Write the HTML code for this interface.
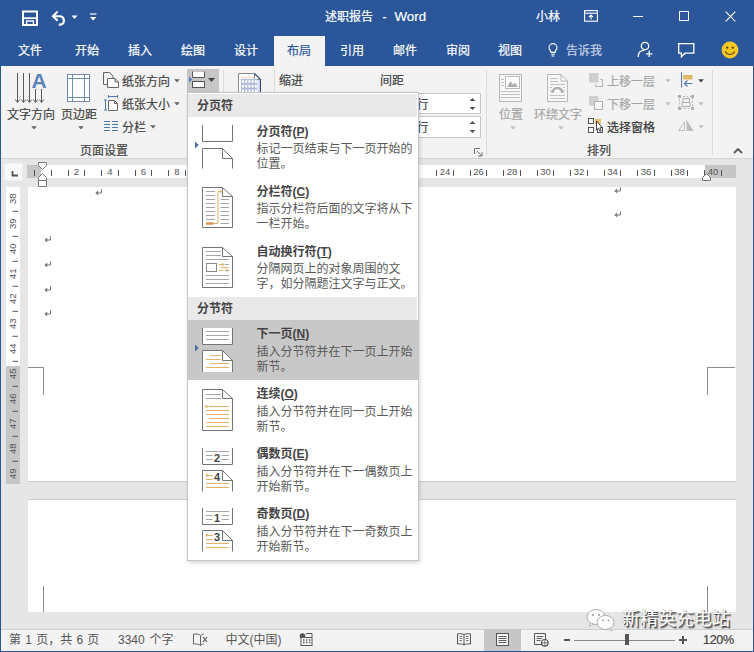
<!DOCTYPE html>
<html lang="zh-CN">
<head>
<meta charset="utf-8">
<title>述职报告 - Word</title>
<style>
html,body{margin:0;padding:0}
body{width:754px;height:652px;position:relative;overflow:hidden;background:#e6e6e6;
 font-family:"Liberation Sans","Noto Sans CJK SC",sans-serif;font-size:12px;color:#444;}
div,span,svg{position:absolute;box-sizing:border-box}
.t{white-space:nowrap;line-height:14px;height:14px;font-size:12px;-webkit-text-stroke:0.200px currentColor}
.n{-webkit-text-stroke:0;color:#595959}
.w{color:#fff}
.dis{color:#a6a6a6}
.b{font-weight:bold}
u{text-decoration:underline}
</style>
</head>
<body>
<!-- ===== title bar / tabs ===== -->
<div id="top" style="left:0;top:0;width:754px;height:66px;background:#2b579a"></div>

<!-- quick access toolbar -->
<svg style="left:22px;top:10px" width="17" height="17" viewBox="0 0 17 17">
 <path d="M1 1.500H15V15H1Z" fill="none" stroke="#fff" stroke-width="2"/>
 <path d="M1.500 8.200H15" stroke="#fff" stroke-width="1.800"/>
 <rect x="4.6" y="11" width="6.8" height="4" fill="none" stroke="#fff" stroke-width="1.4"/>
</svg>
<svg style="left:50px;top:9px" width="20" height="18" viewBox="0 0 20 18">
 <path d="M3 7.2H10.5A4.3 4.3 0 0 1 10.5 15.6H8.8" fill="none" stroke="#fff" stroke-width="2.100"/>
 <path d="M7.600 2.600L3 7.200L7.600 11.800" fill="none" stroke="#fff" stroke-width="2.100"/>
</svg>
<svg style="left:71px;top:15px" width="8" height="5" viewBox="0 0 8 5"><path d="M0.5 0.5H6.5L3.5 4Z" fill="#fff"/></svg>
<svg style="left:89px;top:13px" width="9" height="9" viewBox="0 0 9 9"><path d="M1 1H7.4" stroke="#fff" stroke-width="1.2"/><path d="M1 4H7.4L4.2 7.6Z" fill="#fff"/></svg>
<!-- title -->
<span class="t w" style="left:325px;top:10px">述职报告</span><span class="t w" style="left:382.500px;top:10px">-</span><span class="t w" style="left:394.500px;top:9.500px;font-size:13.300px">Word</span>
<span class="t w" style="left:536px;top:10px">小林</span>
<!-- ribbon display options -->
<svg style="left:584px;top:10px" width="14" height="12" viewBox="0 0 14 12">
 <rect x="0.6" y="0.6" width="12.8" height="10.6" fill="none" stroke="#fff" stroke-width="1.1"/>
 <path d="M0.6 3.2H13.4" stroke="#fff" stroke-width="1.1"/>
 <path d="M7 9.6V5.2M4.8 7.2L7 5L9.2 7.2" fill="none" stroke="#fff" stroke-width="1.1"/>
</svg>
<div style="left:633px;top:16px;width:10px;height:1px;background:#fff"></div>
<div style="left:679px;top:11px;width:10px;height:10px;border:1px solid #fff"></div>
<svg style="left:725px;top:11px" width="11" height="11" viewBox="0 0 11 11"><path d="M0.7 0.7L10.3 10.3M10.3 0.7L0.7 10.3" stroke="#fff" stroke-width="1.1"/></svg>
<!-- tabs -->
<div style="left:274px;top:36px;width:51px;height:30px;background:#f3f3f3"></div>
<span class="t w" style="left:18px;top:44px">文件</span>
<span class="t w" style="left:75px;top:44px">开始</span>
<span class="t w" style="left:128px;top:44px">插入</span>
<span class="t w" style="left:181px;top:44px">绘图</span>
<span class="t w" style="left:234px;top:44px">设计</span>
<span class="t" style="left:287px;top:44px;color:#2b579a">布局</span>
<span class="t w" style="left:340px;top:44px">引用</span>
<span class="t w" style="left:393px;top:44px">邮件</span>
<span class="t w" style="left:446px;top:44px">审阅</span>
<span class="t w" style="left:498px;top:44px">视图</span>
<svg style="left:548px;top:43px" width="10" height="14" viewBox="0 0 10 14">
 <path d="M3 9.4C3 7.6 1 6.9 1 4.6A4 4 0 0 1 9 4.6C9 6.9 7 7.6 7 9.4Z" fill="none" stroke="#fff" stroke-width="1.1"/>
 <path d="M3.2 11.2H6.8M3.6 13H6.4" stroke="#fff" stroke-width="1.1"/>
</svg>
<span class="t" style="left:566px;top:44px;color:#c5d1e6">告诉我</span>
<!-- share -->
<svg style="left:637px;top:41px" width="17" height="17" viewBox="0 0 17 17">
 <circle cx="8" cy="5" r="3.7" fill="none" stroke="#fff" stroke-width="1.3"/>
 <path d="M1.2 16C1.2 11.6 4 9.4 7.4 9.4" fill="none" stroke="#fff" stroke-width="1.3"/>
 <path d="M12.2 9.6V16M9 12.8H15.4" stroke="#fff" stroke-width="1.3"/>
</svg>
<!-- comments -->
<svg style="left:678px;top:43px" width="17" height="15" viewBox="0 0 17 15">
 <path d="M0.7 0.7H15.8V10.2H7L3.4 13.8V10.2H0.7Z" fill="none" stroke="#fff" stroke-width="1.3" stroke-linejoin="miter"/>
</svg>
<!-- smiley -->
<svg style="left:721px;top:41px" width="18" height="18" viewBox="0 0 18 18">
 <circle cx="9" cy="9" r="8.4" fill="#f6c822"/>
 <circle cx="6.2" cy="6.6" r="1.2" fill="#5a4a10"/><circle cx="11.8" cy="6.6" r="1.2" fill="#5a4a10"/>
 <path d="M4.4 10.4C5.6 14.4 12.4 14.4 13.6 10.4" fill="none" stroke="#5a4a10" stroke-width="1.2"/>
</svg>
<!-- ===== ribbon ===== -->
<div id="ribbon" style="left:1px;top:66px;width:752px;height:93px;background:#f3f3f3;border-bottom:1px solid #d4d4d4"></div>

<!-- text direction -->
<svg style="left:14px;top:72px" width="36" height="33" viewBox="0 0 36 33">
 <g stroke="#5a5a5a" stroke-width="1" fill="none">
  <path d="M3.5 1V30M9.5 1V30M15.5 1V30M21.5 17V30M27.5 17V30"/>
  <path d="M1.300 27.500L3.500 30.500L5.700 27.500M7.300 27.500L9.500 30.500L11.700 27.500M13.300 27.500L15.500 30.500L17.700 27.500M19.300 27.500L21.500 30.500L23.700 27.500M25.300 27.500L27.500 30.500L29.700 27.500"/>
 </g>
 <text x="17.5" y="15.6" font-family="Liberation Sans, sans-serif" font-weight="bold" font-size="21" fill="#5b83b8">A</text>
</svg>
<span class="t" style="left:7px;top:108px">文字方向</span>
<svg style="left:30.5px;top:126.3px" width="6" height="4" viewBox="0 0 6 4"><path d="M0.200 0.300H5.800L3 3.400Z" fill="#666"/></svg>
<!-- margins -->
<svg style="left:67px;top:74px" width="23" height="28" viewBox="0 0 23 28">
 <rect x="0.5" y="0.5" width="22" height="27" fill="#fff" stroke="#6d8fb3"/>
 <path d="M5.500 0.500V27.500M17.500 0.500V27.500M0.500 4.500H22.500M0.500 23.500H22.500" stroke="#6d8fb3" fill="none"/>
</svg>
<span class="t" style="left:61px;top:108px">页边距</span>
<svg style="left:77.5px;top:126.3px" width="6" height="4" viewBox="0 0 6 4"><path d="M0.200 0.300H5.800L3 3.400Z" fill="#666"/></svg>
<!-- orientation -->
<svg style="left:103px;top:72px" width="16" height="16" viewBox="0 0 16 16">
 <path d="M4 12.5H0.5V0.5H6.5L10 4V6" fill="none" stroke="#666"/>
 <path d="M4.5 6.5H12L15.5 10V15.5H4.5Z" fill="#fff" stroke="#666"/>
 <path d="M12 6.5V10H15.5" fill="none" stroke="#666"/>
</svg>
<span class="t" style="left:122px;top:75px">纸张方向</span>
<svg style="left:173.5px;top:79.3px" width="6" height="4" viewBox="0 0 6 4"><path d="M0.200 0.300H5.800L3 3.400Z" fill="#666"/></svg>
<!-- size -->
<svg style="left:104px;top:95px" width="15" height="16" viewBox="0 0 15 16">
 <path d="M4.5 1.5H13.5M4.5 0V3M13.5 0V3M1.5 5V15M0 5H3M0 15H3" stroke="#4f7cb3" fill="none"/>
 <path d="M4.5 5.5H10.5L13.5 8.5V15.500H4.5Z" fill="#fff" stroke="#666"/>
 <path d="M10.5 5.5V8.5H13.5" fill="none" stroke="#666"/>
</svg>
<span class="t" style="left:122px;top:98px">纸张大小</span>
<svg style="left:173.5px;top:102.3px" width="6" height="4" viewBox="0 0 6 4"><path d="M0.200 0.300H5.800L3 3.400Z" fill="#666"/></svg>
<!-- columns -->
<svg style="left:104px;top:121px" width="14" height="10" viewBox="0 0 14 10">
 <path d="M0 0.500H6M0 3.500H6M0 6.500H6M0 9.500H6M8 0.500H14M8 3.500H14M8 6.500H14M8 9.500H14" stroke="#4f7cb3"/>
</svg>
<span class="t" style="left:122px;top:121px">分栏</span>
<svg style="left:149.5px;top:125.3px" width="6" height="4" viewBox="0 0 6 4"><path d="M0.200 0.300H5.800L3 3.400Z" fill="#666"/></svg>
<span class="t" style="left:80px;top:144px">页面设置</span>
<!-- breaks button -->
<div style="left:187px;top:69px;width:32px;height:24px;background:#c6c6c6"></div>
<svg style="left:188px;top:71px" width="28" height="18" viewBox="0 0 28 18">
 <path d="M1 5.500L4 8.500L1 11.500Z" fill="#4f7cb3"/>
 <path d="M4.500 1V7H17V1Z" fill="#fff" stroke="none"/>
 <path d="M4.500 0.500V6.500H16.500V0.500" fill="none" stroke="#555"/>
 <rect x="4.500" y="10.500" width="12" height="6" fill="#fff" stroke="#555"/>
 <path d="M20 7H27L23.500 11Z" fill="#444"/>
</svg>
<div style="left:223px;top:70px;width:1px;height:85px;background:#dadada"></div>
<!-- draft paper icon -->
<svg style="left:238px;top:73px" width="23" height="24" viewBox="0 0 23 24">
 <path d="M0.500 0.500H16.500L22.500 6.500V24H0.500Z" fill="#fff" stroke="#8c8c8c"/>
 <rect x="19.500" y="6.500" width="3" height="18" fill="#d3def2"/>
 <path d="M16.500 0.500V6.500H22.500" fill="none" stroke="#8c8c8c"/>
 <path d="M16.500 0.500L22.500 6.500V24" fill="none" stroke="#33456f" stroke-width="1.100"/>
 <path d="M3 4.500H16" stroke="#f3d9b5"/>
 <rect x="3" y="6" width="16" height="18" fill="#b2b9da"/>
 <rect x="4" y="7.2" width="2" height="2.600" fill="#fff"/><rect x="7.2" y="7.2" width="2" height="2.600" fill="#fff"/><rect x="10.4" y="7.2" width="2" height="2.600" fill="#fff"/><rect x="13.6" y="7.2" width="2" height="2.600" fill="#fff"/><rect x="16.8" y="7.2" width="2" height="2.600" fill="#fff"/><rect x="4" y="11.9" width="2" height="2.600" fill="#fff"/><rect x="7.2" y="11.9" width="2" height="2.600" fill="#fff"/><rect x="10.4" y="11.9" width="2" height="2.600" fill="#fff"/><rect x="13.6" y="11.9" width="2" height="2.600" fill="#fff"/><rect x="16.8" y="11.9" width="2" height="2.600" fill="#fff"/><rect x="4" y="16.6" width="2" height="2.600" fill="#fff"/><rect x="7.2" y="16.6" width="2" height="2.600" fill="#fff"/><rect x="10.4" y="16.6" width="2" height="2.600" fill="#fff"/><rect x="13.6" y="16.6" width="2" height="2.600" fill="#fff"/><rect x="16.8" y="16.6" width="2" height="2.600" fill="#fff"/><rect x="4" y="21.3" width="2" height="2.600" fill="#fff"/><rect x="7.2" y="21.3" width="2" height="2.600" fill="#fff"/><rect x="10.4" y="21.3" width="2" height="2.600" fill="#fff"/><rect x="13.6" y="21.3" width="2" height="2.600" fill="#fff"/><rect x="16.8" y="21.3" width="2" height="2.600" fill="#fff"/>
</svg>
<div style="left:274px;top:70px;width:1px;height:85px;background:#dadada"></div>
<span class="t" style="left:279px;top:74px">缩进</span>
<span class="t" style="left:380px;top:74px">间距</span>
<!-- spinner boxes -->
<div style="left:380px;top:93px;width:101px;height:21px;background:#fff;border:1px solid #c8c8c8"></div>
<div style="left:380px;top:116px;width:101px;height:22px;background:#fff;border:1px solid #c8c8c8"></div>
<span class="t" style="left:416.500px;top:98px">行</span>
<span class="t" style="left:416.500px;top:121px">行</span>
<svg style="left:469px;top:97px" width="7" height="14" viewBox="0 0 7 14"><path d="M0.500 4L3.500 1L6.500 4ZM0.500 10L3.500 13L6.500 10Z" fill="#555"/></svg>
<svg style="left:469px;top:120px" width="7" height="14" viewBox="0 0 7 14"><path d="M0.500 4L3.500 1L6.500 4ZM0.500 10L3.500 13L6.500 10Z" fill="#555"/></svg>
<!-- dialog launcher -->
<svg style="left:473.500px;top:147.500px" width="9" height="9" viewBox="0 0 9 9"><path d="M0.500 6V0.500H6" fill="none" stroke="#777"/><path d="M3 3L8 8M8 4V8H4" fill="none" stroke="#777"/></svg>
<div style="left:486px;top:70px;width:1px;height:85px;background:#dadada"></div>
<!-- position -->
<svg style="left:499px;top:74px" width="23" height="28" viewBox="0 0 23 28">
 <rect x="0.500" y="0.500" width="22" height="27" fill="#f8f8f8" stroke="#b8b8b8"/>
 <rect x="6.500" y="2.500" width="14" height="12" fill="#fff" stroke="#b8b8b8"/>
 <path d="M8 13L11.500 7L14 10.500L16 8.500L19 13Z" fill="#b0b0b0"/>
 <path d="M2 5.500H5M2 8.500H5M2 11.500H5M2 17.500H21M2 20.500H21M2 23.500H21" stroke="#c0c0c0"/>
</svg>
<span class="t dis" style="left:499px;top:108px">位置</span>
<svg style="left:509.5px;top:126.3px" width="6" height="4" viewBox="0 0 6 4"><path d="M0.200 0.300H5.800L3 3.400Z" fill="#c0c0c0"/></svg>
<!-- wrap text -->
<svg style="left:547px;top:74px" width="21" height="28" viewBox="0 0 21 28">
 <path d="M0.500 0.500H14L20.500 7V27.500H0.500Z" fill="#f8f8f8" stroke="#b8b8b8"/>
 <path d="M14 0.500V7H20.500" fill="none" stroke="#b8b8b8"/>
 <path d="M3 4.500H11M3 7.500H11M3 10.500H18M3 21.500H18M3 24.500H18M3 13.500H5M16 13.500H18M3 16.500H4.500M16.500 16.500H18" stroke="#c0c0c0"/>
 <path d="M5.500 19A5 5 0 0 1 15.500 19" fill="none" stroke="#b0b0b0" stroke-width="2.600"/>
</svg>
<span class="t dis" style="left:534px;top:108px">环绕文字</span>
<svg style="left:557.5px;top:126.3px" width="6" height="4" viewBox="0 0 6 4"><path d="M0.200 0.300H5.800L3 3.400Z" fill="#c0c0c0"/></svg>
<!-- bring forward -->
<svg style="left:589px;top:73px" width="15" height="15" viewBox="0 0 15 15">
 <rect x="0" y="0" width="9.500" height="9.500" fill="#cfcfcf"/>
 <path d="M6.500 11.500V13.500H13.500V6.500H11.500" fill="none" stroke="#b0b0b0"/>
</svg>
<span class="t dis" style="left:607px;top:75px">上移一层</span>
<svg style="left:664.5px;top:79.3px" width="6" height="4" viewBox="0 0 6 4"><path d="M0.200 0.300H5.800L3 3.400Z" fill="#c0c0c0"/></svg>
<!-- send backward -->
<svg style="left:589px;top:96px" width="15" height="15" viewBox="0 0 15 15">
 <rect x="0" y="0" width="9.500" height="9.500" fill="#cfcfcf"/>
 <rect x="5.500" y="5.500" width="8" height="8" fill="#f8f8f8" stroke="#b0b0b0"/>
</svg>
<span class="t dis" style="left:607px;top:98px">下移一层</span>
<svg style="left:664.5px;top:102.3px" width="6" height="4" viewBox="0 0 6 4"><path d="M0.200 0.300H5.800L3 3.400Z" fill="#c0c0c0"/></svg>
<!-- selection pane -->
<svg style="left:587px;top:117px" width="18" height="17" viewBox="0 0 18 17">
 <rect x="1.500" y="1.500" width="5" height="5" fill="none" stroke="#555"/>
 <rect x="1.500" y="10.500" width="5" height="5" fill="#fff" stroke="#555"/>
 <rect x="10.500" y="10.500" width="5" height="5" fill="#fff" stroke="#555"/>
 <rect x="8" y="2" width="6" height="5" fill="#e9c46a"/>
 <path d="M9.500 4V13L11.500 11.300L13 14.500L14.300 13.900L12.900 10.800L15.300 10.600Z" fill="#fff" stroke="#333" stroke-width="0.900"/>
</svg>
<span class="t" style="left:607px;top:121px;color:#333">选择窗格</span>
<span class="t" style="left:587px;top:144px">排列</span>
<!-- align -->
<svg style="left:680px;top:72px" width="14" height="16" viewBox="0 0 14 16">
 <path d="M1.500 0.500V15.500" stroke="#4f7cb3"/>
 <rect x="3" y="3" width="9.500" height="4.500" fill="#e2b866"/>
 <path d="M12.500 11.500H4.500M7.500 8.500L4.500 11.500L7.500 14.500" fill="none" stroke="#4f7cb3" stroke-width="1.200"/>
</svg>
<svg style="left:697.5px;top:79.3px" width="6" height="4" viewBox="0 0 6 4"><path d="M0.200 0.300H5.800L3 3.400Z" fill="#444"/></svg>
<!-- group -->
<svg style="left:678px;top:95px" width="16" height="15" viewBox="0 0 16 15">
 <rect x="1.500" y="1.500" width="13" height="12" fill="none" stroke="#b8b8b8" stroke-dasharray="2 1.500"/>
 <rect x="5" y="3.500" width="6.500" height="4.500" fill="none" stroke="#b0b0b0"/>
 <rect x="4" y="7.500" width="8" height="4" fill="#f3f3f3" stroke="#b0b0b0"/>
 <g fill="#b0b0b0"><rect x="0" y="0" width="3" height="3"/><rect x="13" y="0" width="3" height="3"/><rect x="0" y="12" width="3" height="3"/><rect x="13" y="12" width="3" height="3"/></g>
</svg>
<svg style="left:697.5px;top:102.3px" width="6" height="4" viewBox="0 0 6 4"><path d="M0.200 0.300H5.800L3 3.400Z" fill="#c0c0c0"/></svg>
<!-- rotate -->
<svg style="left:678px;top:119px" width="16" height="13" viewBox="0 0 16 13">
 <path d="M6.500 11.500H0.800L6.500 3Z" fill="none" stroke="#bdbdbd"/>
 <path d="M8.500 12V0.500L15.500 12Z" fill="#bdbdbd"/>
</svg>
<svg style="left:697.5px;top:125.3px" width="6" height="4" viewBox="0 0 6 4"><path d="M0.200 0.300H5.800L3 3.400Z" fill="#c0c0c0"/></svg>
<div style="left:712px;top:70px;width:1px;height:85px;background:#dadada"></div>
<!-- collapse ribbon -->
<svg style="left:733px;top:147px" width="10" height="7" viewBox="0 0 10 7"><path d="M1 6L5 2L9 6" fill="none" stroke="#5a5a5a" stroke-width="1.800"/></svg>
<!-- ===== document area ===== -->
<div id="doc" style="left:1px;top:159px;width:752px;height:470px;background:#e6e6e6"></div>
<div style="left:4px;top:163px;width:19px;height:18px;background:#f8f8f8;border:1px solid #efefef"></div>
<svg style="left:11px;top:171px" width="8" height="6" viewBox="0 0 8 6"><path d="M1.500 0V4.500H7" fill="none" stroke="#555" stroke-width="1.800"/></svg>
<div style="left:27px;top:165px;width:709px;height:13px;background:#c6c6c6"></div>
<div style="left:41px;top:165px;width:664px;height:13px;background:#fff"></div>
<svg style="left:0;top:160px" width="754" height="28" viewBox="0 0 754 28"><path d="M34.5 10V16M51.5 10V16M68.5 10V16M84.5 10V16M101.5 10V16M118.5 10V16M135.5 10V16M151.5 10V16M168.5 10V16M185.5 10V16M202.5 10V16M218.5 10V16M235.5 10V16M252.5 10V16M269.5 10V16M285.5 10V16M302.5 10V16M319.5 10V16M336.5 10V16M352.5 10V16M369.5 10V16M386.5 10V16M403.5 10V16M436.5 10V16M453.5 10V16M470.5 10V16M486.5 10V16M503.5 10V16M520.5 10V16M537.5 10V16M553.5 10V16M570.5 10V16M587.5 10V16M604.5 10V16M620.5 10V16M637.5 10V16M654.5 10V16M671.5 10V16M687.5 10V16M704.5 10V16M721.5 10V16" stroke="#555" stroke-width="1" fill="none"/><text x="76.5" y="15" text-anchor="middle" font-family="Liberation Sans, sans-serif" font-size="9.500" fill="#555">2</text><text x="110.0" y="15" text-anchor="middle" font-family="Liberation Sans, sans-serif" font-size="9.500" fill="#555">4</text><text x="143.5" y="15" text-anchor="middle" font-family="Liberation Sans, sans-serif" font-size="9.500" fill="#555">6</text><text x="177.0" y="15" text-anchor="middle" font-family="Liberation Sans, sans-serif" font-size="9.500" fill="#555">8</text><text x="210.5" y="15" text-anchor="middle" font-family="Liberation Sans, sans-serif" font-size="9.500" fill="#555">10</text><text x="244.0" y="15" text-anchor="middle" font-family="Liberation Sans, sans-serif" font-size="9.500" fill="#555">12</text><text x="277.5" y="15" text-anchor="middle" font-family="Liberation Sans, sans-serif" font-size="9.500" fill="#555">14</text><text x="311.0" y="15" text-anchor="middle" font-family="Liberation Sans, sans-serif" font-size="9.500" fill="#555">16</text><text x="344.5" y="15" text-anchor="middle" font-family="Liberation Sans, sans-serif" font-size="9.500" fill="#555">18</text><text x="378.0" y="15" text-anchor="middle" font-family="Liberation Sans, sans-serif" font-size="9.500" fill="#555">20</text><text x="411.5" y="15" text-anchor="middle" font-family="Liberation Sans, sans-serif" font-size="9.500" fill="#555">22</text><text x="445.0" y="15" text-anchor="middle" font-family="Liberation Sans, sans-serif" font-size="9.500" fill="#555">24</text><text x="478.5" y="15" text-anchor="middle" font-family="Liberation Sans, sans-serif" font-size="9.500" fill="#555">26</text><text x="512.0" y="15" text-anchor="middle" font-family="Liberation Sans, sans-serif" font-size="9.500" fill="#555">28</text><text x="545.5" y="15" text-anchor="middle" font-family="Liberation Sans, sans-serif" font-size="9.500" fill="#555">30</text><text x="579.0" y="15" text-anchor="middle" font-family="Liberation Sans, sans-serif" font-size="9.500" fill="#555">32</text><text x="612.5" y="15" text-anchor="middle" font-family="Liberation Sans, sans-serif" font-size="9.500" fill="#555">34</text><text x="646.0" y="15" text-anchor="middle" font-family="Liberation Sans, sans-serif" font-size="9.500" fill="#555">36</text><text x="679.5" y="15" text-anchor="middle" font-family="Liberation Sans, sans-serif" font-size="9.500" fill="#555">38</text><text x="713.0" y="15" text-anchor="middle" font-family="Liberation Sans, sans-serif" font-size="9.500" fill="#555">40</text><path d="M38.500 2.500H46.500V5.500L42.500 9.500L38.500 5.500Z" fill="#fff" stroke="#777"/><path d="M38.500 20.500V17.500L42.500 13.500L46.500 17.500V20.500ZM38.500 20.500H46.500V26.500H38.500Z" fill="#fff" stroke="#777"/><path d="M702.500 20.500V17.500L706.500 13.500L710.500 17.500V20.500Z" fill="#fff" stroke="#777"/></svg>
<div style="left:28px;top:187px;width:708px;height:294.500px;background:#fff;border-bottom:1px solid #cdcdcd"></div>
<div style="left:28px;top:499px;width:708px;height:113px;background:#fff;border-top:1px solid #cdcdcd"></div>
<div style="left:28px;top:367px;width:16px;height:1px;background:#8c8c8c"></div>
<div style="left:43px;top:367px;width:1px;height:28px;background:#8c8c8c"></div>
<div style="left:707px;top:367px;width:28px;height:1px;background:#8c8c8c"></div>
<div style="left:707px;top:367px;width:1px;height:28px;background:#8c8c8c"></div>
<div style="left:43px;top:586px;width:1px;height:26px;background:#8c8c8c"></div>
<div style="left:707px;top:586px;width:1px;height:26px;background:#8c8c8c"></div>
<div style="left:6px;top:187px;width:14px;height:179px;background:#fff"></div>
<div style="left:6px;top:366px;width:14px;height:118px;background:#c6c6c6"></div>
<svg style="left:0;top:180px" width="28" height="310" viewBox="0 0 28 310"><text transform="translate(16.300 18.8) rotate(-90)" text-anchor="middle" font-family="Liberation Sans, sans-serif" font-size="9.500" fill="#555">38</text><text transform="translate(16.300 43.8) rotate(-90)" text-anchor="middle" font-family="Liberation Sans, sans-serif" font-size="9.500" fill="#555">39</text><text transform="translate(16.300 68.8) rotate(-90)" text-anchor="middle" font-family="Liberation Sans, sans-serif" font-size="9.500" fill="#555">40</text><text transform="translate(16.300 93.8) rotate(-90)" text-anchor="middle" font-family="Liberation Sans, sans-serif" font-size="9.500" fill="#555">41</text><text transform="translate(16.300 118.8) rotate(-90)" text-anchor="middle" font-family="Liberation Sans, sans-serif" font-size="9.500" fill="#555">42</text><text transform="translate(16.300 143.8) rotate(-90)" text-anchor="middle" font-family="Liberation Sans, sans-serif" font-size="9.500" fill="#555">43</text><text transform="translate(16.300 168.8) rotate(-90)" text-anchor="middle" font-family="Liberation Sans, sans-serif" font-size="9.500" fill="#555">44</text><text transform="translate(16.300 193.8) rotate(-90)" text-anchor="middle" font-family="Liberation Sans, sans-serif" font-size="9.500" fill="#555">45</text><text transform="translate(16.300 218.8) rotate(-90)" text-anchor="middle" font-family="Liberation Sans, sans-serif" font-size="9.500" fill="#555">46</text><text transform="translate(16.300 243.8) rotate(-90)" text-anchor="middle" font-family="Liberation Sans, sans-serif" font-size="9.500" fill="#555">47</text><text transform="translate(16.300 268.8) rotate(-90)" text-anchor="middle" font-family="Liberation Sans, sans-serif" font-size="9.500" fill="#555">48</text><text transform="translate(16.300 293.8) rotate(-90)" text-anchor="middle" font-family="Liberation Sans, sans-serif" font-size="9.500" fill="#555">49</text><path d="M12.500 31.3H18M12.500 56.3H18M12.500 81.3H18M12.500 106.3H18M12.500 131.3H18M12.500 156.3H18M12.500 181.3H18M12.500 206.3H18M12.500 231.3H18M12.500 256.3H18M12.500 281.3H18" stroke="#555" fill="none"/></svg>
<svg style="left:94.5px;top:189.1px" width="8" height="7" viewBox="0 0 8 7"><path d="M6.500 0.300V4H2" fill="none" stroke="#777" stroke-width="1"/><path d="M0.300 4L3.200 1.500V6.500Z" fill="#777"/></svg>
<svg style="left:44.4px;top:236.3px" width="8" height="7" viewBox="0 0 8 7"><path d="M6.500 0.300V4H2" fill="none" stroke="#777" stroke-width="1"/><path d="M0.300 4L3.200 1.500V6.500Z" fill="#777"/></svg>
<svg style="left:44.4px;top:261.3px" width="8" height="7" viewBox="0 0 8 7"><path d="M6.500 0.300V4H2" fill="none" stroke="#777" stroke-width="1"/><path d="M0.300 4L3.200 1.500V6.500Z" fill="#777"/></svg>
<svg style="left:44.4px;top:285.8px" width="8" height="7" viewBox="0 0 8 7"><path d="M6.500 0.300V4H2" fill="none" stroke="#777" stroke-width="1"/><path d="M0.300 4L3.200 1.500V6.500Z" fill="#777"/></svg>
<svg style="left:44.4px;top:310.3px" width="8" height="7" viewBox="0 0 8 7"><path d="M6.500 0.300V4H2" fill="none" stroke="#777" stroke-width="1"/><path d="M0.300 4L3.200 1.500V6.500Z" fill="#777"/></svg>
<svg style="left:613.7px;top:186.5px" width="8" height="7" viewBox="0 0 8 7"><path d="M6.500 0.300V4H2" fill="none" stroke="#777" stroke-width="1"/><path d="M0.300 4L3.200 1.500V6.500Z" fill="#777"/></svg>
<svg style="left:613.7px;top:210.8px" width="8" height="7" viewBox="0 0 8 7"><path d="M6.500 0.300V4H2" fill="none" stroke="#777" stroke-width="1"/><path d="M0.300 4L3.200 1.500V6.500Z" fill="#777"/></svg>
<!-- ===== status bar ===== -->
<div id="status" style="left:1px;top:629px;width:752px;height:22px;background:#f3f3f3;border-top:1px solid #d0d0d0"></div>
<!-- ===== breaks menu ===== -->
<div id="menu" style="left:187px;top:92px;width:232px;height:469px;background:#fff;border:1px solid #c6c6c6;box-shadow:1px 2px 4px rgba(0,0,0,0.160)"></div>
<div style="left:188px;top:94px;width:228.500px;height:23px;background:#e9e9e9"></div>
<div style="left:188px;top:297px;width:228.500px;height:23px;background:#e9e9e9"></div>
<div style="left:188px;top:320px;width:230px;height:60px;background:#c8c8c8"></div>
<span class="t b" style="-webkit-text-stroke:0;left:197px;top:98.500px">分页符</span>
<span class="t b" style="-webkit-text-stroke:0;left:197px;top:301.500px">分节符</span>
<span class="t b" style="-webkit-text-stroke:0;left:256.500px;top:125px">分页符(<u>P</u>)</span>
<span class="t n" style="left:256.500px;top:142px">标记一页结束与下一页开始的</span>
<span class="t n" style="left:256.500px;top:157px">位置。</span>
<span class="t b" style="-webkit-text-stroke:0;left:256.500px;top:185px">分栏符(<u>C</u>)</span>
<span class="t n" style="left:256.500px;top:202px">指示分栏符后面的文字将从下</span>
<span class="t n" style="left:256.500px;top:217px">一栏开始。</span>
<span class="t b" style="-webkit-text-stroke:0;left:256.500px;top:245px">自动换行符(<u>T</u>)</span>
<span class="t n" style="left:256.500px;top:262px">分隔网页上的对象周围的文</span>
<span class="t n" style="left:256.500px;top:277px">字，如分隔题注文字与正文。</span>
<span class="t b" style="-webkit-text-stroke:0;left:256.500px;top:327px">下一页(<u>N</u>)</span>
<span class="t n" style="left:256.500px;top:345px">插入分节符并在下一页上开始</span>
<span class="t n" style="left:256.500px;top:360px">新节。</span>
<span class="t b" style="-webkit-text-stroke:0;left:256.500px;top:387px">连续(<u>O</u>)</span>
<span class="t n" style="left:256.500px;top:405px">插入分节符并在同一页上开始</span>
<span class="t n" style="left:256.500px;top:420px">新节。</span>
<span class="t b" style="-webkit-text-stroke:0;left:256.500px;top:447px">偶数页(<u>E</u>)</span>
<span class="t n" style="left:256.500px;top:465px">插入分节符并在下一偶数页上</span>
<span class="t n" style="left:256.500px;top:480px">开始新节。</span>
<span class="t b" style="-webkit-text-stroke:0;left:256.500px;top:507px">奇数页(<u>D</u>)</span>
<span class="t n" style="left:256.500px;top:525px">插入分节符并在下一奇数页上</span>
<span class="t n" style="left:256.500px;top:540px">开始新节。</span>
<svg style="left:195px;top:141px" width="4" height="8" viewBox="0 0 4 8"><path d="M0 0.500L3.800 4L0 7.500Z" fill="#4f6f9f"/></svg>
<svg style="left:195px;top:344px" width="4" height="8" viewBox="0 0 4 8"><path d="M0 0.500L3.800 4L0 7.500Z" fill="#4f6f9f"/></svg>
<svg style="left:200px;top:120px" width="36" height="436" viewBox="200 120 36 436"><path d="M202.500 125V141.500H232.500V125" fill="none" stroke="#757575"/><path d="M202.500 168.500V148.500H222.500L232.500 158.500V168.500M222.500 148.500V158.500H232.500" fill="none" stroke="#757575"/><path d="M202.500 187.500H222.500L232.500 196.500V227.500H202.500ZM222.500 187.500V196.500H232.500" fill="#fff" stroke="#757575"/><path d="M206 191.5H215M206 195.5H215M206 199.5H215M220.500 199.5H229M206 203.5H215M220.500 203.5H229M206 207.5H215M220.500 207.5H229M206 211.5H215M220.500 211.5H229M206 215.5H215M220.500 215.5H229M206 219.5H215M220.500 219.5H229M206 223.5H215M220.500 223.5H229" stroke="#a6a6a6" fill="none"/><path d="M218 223.500V191.500H221" fill="none" stroke="#e4b26a"/><path d="M220.500 189.500L223 191.500L220.500 193.500Z" fill="#e4b26a"/><path d="M213 223.500H218" stroke="#e4b26a"/><path d="M206 223.500H213.500" stroke="#d9934a" stroke-width="2.400"/><path d="M202.500 247.500H222.500L232.500 256.500V287.500H202.500ZM222.500 247.500V256.500H232.500" fill="#fff" stroke="#757575"/><path d="M206 251.500H221M206 255.500H221M206 259.500H229M206 275.500H229M206 279.500H229M206 283.500H229M225 264.500H229M225 270.500H229" stroke="#a6a6a6" fill="none"/><rect x="206.500" y="263.500" width="10" height="8" fill="#fff" stroke="#8a8a8a"/><path d="M219 264.500H223M221 267.500H229M219 270.500H223" stroke="#e4b26a" fill="none"/><path d="M222 262.500L224.500 264.500L222 266.500ZM226.500 268.500L229 270.500L226.500 272.500Z" fill="#e4b26a"/><path d="M202.500 328V344.500H232.500V328Z" fill="#fff" stroke="none"/><path d="M202.500 328V344.500H232.500V328" fill="none" stroke="#757575"/><path d="M206 331.500H229M206 335.500H229M206 339.500H229" stroke="#a6a6a6" fill="none"/><path d="M202.500 372V350.500H222.500L232.500 360.500V372Z" fill="#fff" stroke="none"/><path d="M202.500 372V350.500H222.500L232.500 360.500V372M222.500 350.500V360.500H232.500" fill="none" stroke="#757575"/><path d="M210 355.500H221M206 359.500H221M210 363.500H229M206 367.500H229" stroke="#e4b26a" fill="none"/><path d="M202.500 389.500H222.500L232.500 398.500V430.500H202.500ZM222.500 389.500V398.500H232.500" fill="#fff" stroke="#757575"/><path d="M206 394.500H221M206 398.500H221" stroke="#a6a6a6" fill="none"/><path d="M209 406.500H229M206 410.500H229M206 414.500H229M210 418.500H229M206 422.500H229M206 426.500H229" stroke="#e4b26a" fill="none"/><path d="M205.500 404.500L208.500 406.500L205.500 408.500Z" fill="#e4b26a"/><path d="M202.500 448V464.5H232.500V448" fill="none" stroke="#757575"/><path d="M206 451.5H229M206 455.5H212.500M221.500 455.5H229M206 459.5H212.500M221.500 459.5H229" stroke="#a6a6a6" fill="none"/><text x="217" y="462" text-anchor="middle" font-family="Liberation Sans, sans-serif" font-weight="bold" font-size="11" fill="#444">2</text><path d="M202.500 491.5V470.5H222.500L232.500 480.5V491.5M222.500 470.5V480.5H232.500" fill="none" stroke="#757575"/><path d="M208 475.5H213M206 479.5H213M206 483.5H229M206 487.5H229" stroke="#e4b26a" fill="none"/><path d="M206 473.5L208.600 475.3L206 477.1Z" fill="#d9a55e"/><text x="217" y="480.6" text-anchor="middle" font-family="Liberation Sans, sans-serif" font-weight="bold" font-size="11" fill="#444">4</text><path d="M202.500 508V524.5H232.500V508" fill="none" stroke="#757575"/><path d="M206 511.5H229M206 515.5H212.500M221.500 515.5H229M206 519.5H212.500M221.500 519.5H229" stroke="#a6a6a6" fill="none"/><text x="217" y="522" text-anchor="middle" font-family="Liberation Sans, sans-serif" font-weight="bold" font-size="11" fill="#444">1</text><path d="M202.500 551.5V530.5H222.500L232.500 540.5V551.5M222.500 530.5V540.5H232.500" fill="none" stroke="#757575"/><path d="M208 535.5H213M206 539.5H213M206 543.5H229M206 547.5H229" stroke="#e4b26a" fill="none"/><path d="M206 533.5L208.600 535.3L206 537.1Z" fill="#d9a55e"/><text x="217" y="540.6" text-anchor="middle" font-family="Liberation Sans, sans-serif" font-weight="bold" font-size="11" fill="#444">3</text></svg>

<span class="t" style="left:9px;top:633px;word-spacing:0.900px;color:#555;-webkit-text-stroke:0">第 1 页，共 6 页</span>
<span class="t" style="left:118px;top:633px;word-spacing:1.500px;color:#555;-webkit-text-stroke:0">3340 个字</span>
<svg style="left:193px;top:633px" width="15" height="13" viewBox="0 0 15 13">
 <path d="M7.500 2.500C6 1 3.500 0.800 0.500 1V11C3.500 10.800 6 11 7.500 12.500V2.500" fill="none" stroke="#666"/>
 <path d="M7.500 2.500C8.500 1.500 10 1 11 1M7.500 12.500C8.500 11.500 9.500 11.200 10.500 11" fill="none" stroke="#666"/>
 <path d="M10 4L14 9M14 4L10 9" stroke="#555" stroke-width="1.200"/>
</svg>
<span class="t" style="left:225.500px;top:633px;color:#555;-webkit-text-stroke:0">中文(中国)</span>
<svg style="left:299px;top:633px" width="14" height="13" viewBox="0 0 14 13">
 <circle cx="3.500" cy="3" r="2.800" fill="#555"/>
 <rect x="2" y="4.500" width="11" height="8" fill="#fff" stroke="#555"/>
 <path d="M7 0.500H13V4" fill="none" stroke="#555"/>
 <path d="M4 7H5.500M7 7H8.500M10 7H11.500M4 9.500H5.500M7 9.500H8.500M10 9.500H11.500" stroke="#555" stroke-width="1.400"/>
</svg>
<!-- view buttons -->
<svg style="left:457px;top:633px" width="14" height="13" viewBox="0 0 14 13">
 <path d="M7 1.500C5.500 0.700 3 0.500 0.500 0.800V11C3 10.700 5.500 11 7 12C8.500 11 11 10.700 13.500 11V0.800C11 0.500 8.500 0.700 7 1.500V12" fill="none" stroke="#555"/>
 <path d="M2.500 3.500H5M2.500 5.500H5M2.500 7.500H5M9 3.500H11.500M9 5.500H11.500M9 7.500H11.500" stroke="#555" stroke-width="0.800"/>
</svg>
<div style="left:484px;top:629px;width:37px;height:22px;background:#c6c6c6"></div>
<svg style="left:496px;top:633px" width="13" height="13" viewBox="0 0 13 13">
 <rect x="0.500" y="0.500" width="12" height="12" fill="#f3f3f3" stroke="#555"/>
 <path d="M2.500 3.500H10.500M2.500 5.500H10.500M2.500 7.500H10.500M2.500 9.500H10.500" stroke="#555" stroke-width="0.900"/>
</svg>
<svg style="left:534px;top:633px" width="15" height="14" viewBox="0 0 15 14">
 <path d="M9 11.500H0.500V0.500H11.500V6" fill="none" stroke="#555"/>
 <path d="M2.500 3.500H9.500M2.500 5.500H8M2.500 7.500H6.500" stroke="#555" stroke-width="0.900"/>
 <circle cx="10.800" cy="9.800" r="3.300" fill="#f3f3f3" stroke="#555" stroke-width="1.200"/>
 <path d="M7.600 9.800H14M10.800 6.500V13" stroke="#555" stroke-width="0.700"/>
</svg>
<!-- zoom slider -->
<div style="left:564px;top:639px;width:6px;height:2px;background:#555"></div>
<div style="left:574px;top:640px;width:101px;height:1px;background:#8a8a8a"></div>
<div style="left:625px;top:634px;width:4px;height:11px;background:#555"></div>
<div style="left:679px;top:639px;width:8px;height:2px;background:#555"></div>
<div style="left:682px;top:636px;width:2px;height:8px;background:#555"></div>
<span class="t" style="left:703px;top:633px;font-size:12.500px;letter-spacing:-0.300px">120%</span>
<!-- watermark -->
<svg style="left:585px;top:607px" width="32" height="26" viewBox="0 0 32 26">
 <ellipse cx="11" cy="10" rx="9" ry="7.500" fill="#fff" stroke="#9a9a9a" stroke-width="0.800"/>
 <path d="M5.500 15.500L4.500 19L8.500 17Z" fill="#fff" stroke="#9a9a9a" stroke-width="0.600"/>
 <ellipse cx="20.500" cy="15.500" rx="8.500" ry="7" fill="#fff" stroke="#9a9a9a" stroke-width="0.800"/>
 <path d="M25 21L27 24L22.500 22.300Z" fill="#fff" stroke="#9a9a9a" stroke-width="0.600"/>
 <circle cx="8" cy="8" r="1" fill="#9a9a9a"/><circle cx="14" cy="8" r="1" fill="#9a9a9a"/>
 <circle cx="18" cy="13.500" r="0.900" fill="#9a9a9a"/><circle cx="23.500" cy="13.500" r="0.900" fill="#9a9a9a"/>
</svg>
<span class="t" style="left:622px;top:608px;font-size:18px;line-height:22px;height:22px;color:#fff;text-shadow:1px 1px 0.500px #4a4a4a,-0.500px -0.500px 0.500px #999,1.800px 1.800px 1px #777">新精英充电站</span>
<!-- window border -->
<div style="left:0;top:66px;width:1.300px;height:586px;background:#2b579a"></div>
<div style="left:752.500px;top:66px;width:1.500px;height:586px;background:#2b579a"></div>
<div style="left:0;top:650.500px;width:754px;height:1.500px;background:#2b579a"></div>
</body>
</html>
